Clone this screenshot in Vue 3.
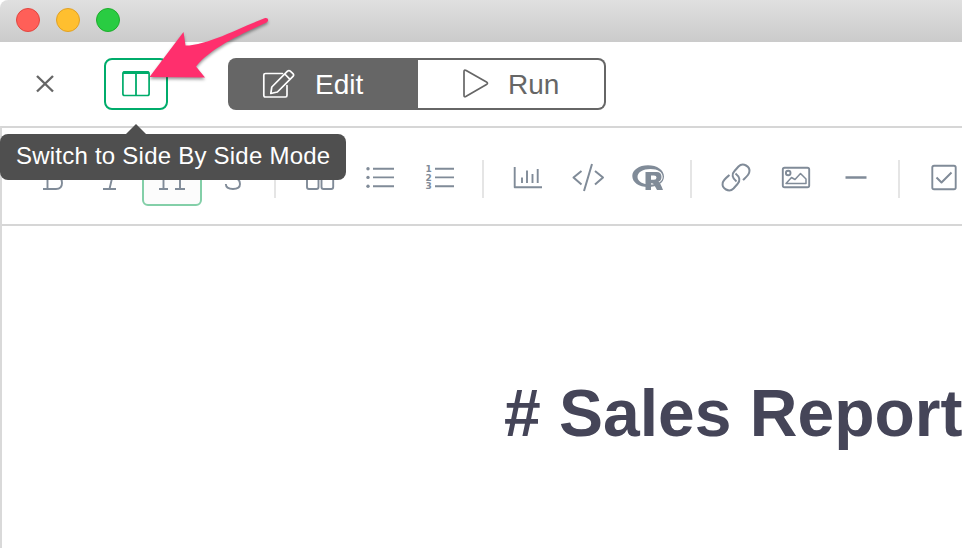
<script setup>
const ol = [{ n: 1, y: 169 }, { n: 2, y: 177.5 }, { n: 3, y: 186 }]
</script>

<template>
  <div class="window">
    <div class="titlebar">
      <i class="light red"></i><i class="light yellow"></i><i class="light green"></i>
    </div>
    <header class="header">
      <button class="close" aria-label="Close">
        <svg width="20" height="20" viewBox="35 74 20 20"><path d="M37 76L53 91.500M53 76L37 91.500" stroke="#666" stroke-width="2.400" fill="none" /></svg>
      </button>
      <div class="mode">
        <svg width="28" height="26" viewBox="122 71 28 26" fill="none" stroke="#00ac6b"><rect x="122.900" y="71.900" width="26.200" height="23.600" rx="1.800" stroke-width="1.700" /><path d="M123 72.700H149" stroke-width="2.600" /><path d="M136 73V95.500" stroke-width="1.800" /></svg>
        <div class="tooltip"><span>Switch to Side By Side Mode</span></div>
      </div>
      <div class="segments">
        <div class="segment edit">
          <svg width="34" height="30" viewBox="262 69 34 30" fill="none" stroke="#fff" stroke-width="1.700" stroke-linejoin="round" stroke-linecap="round"><path d="M282.500 73.500H265.500Q263.800 73.500 263.800 75V95.300Q263.800 97 265.500 97H285.500Q287 97 287 95.300V85.500" /><path d="M270.800 93.500L271.800 87L287.500 71.200Q289 70 290.300 71.200L293 73.700Q294.200 75 293 76.300L277.400 92ZM284.800 74L290 79.300" /></svg>
          <span>Edit</span>
        </div>
        <div class="segment run">
          <svg width="28" height="30" viewBox="462 69 28 30" fill="none" stroke="#666" stroke-width="1.700" stroke-linejoin="round"><path d="M464 71.800Q464 69.300 466.200 70.600L486.500 82Q488.500 83.300 486.500 84.600L466.200 96.300Q464 97.500 464 95.200Z" /></svg>
          <span>Run</span>
        </div>
      </div>
    </header>
    <main class="editor">
      <div class="toolbar">
        <div class="tool"><svg viewBox="22 148 60 58"><path d="M43 165.500H55Q61 165.500 61 171Q61 176 55 176.500Q62 176.500 62 183Q62 189 56 189H43M47.500 165.500V189M47.500 176.500H55" /></svg></div>
        <div class="tool"><svg viewBox="82 148 60 58"><path d="M109 165.500H120M103 189H116M115 165.500L109.500 189" /></svg></div>
        <div class="tool active"><svg viewBox="142 148 60 58"><path d="M159 165.500H168M176 165.500H185M159 189H168M175 189H185M163.500 165.500V189M180 165.500V189M163.500 177H180" /></svg></div>
        <div class="tool"><svg viewBox="202 148 60 58"><path d="M239 169Q238 165 232 165Q226 165 226 171Q226 176 232 177Q240 178 240 184Q240 189 233 189Q226 189 225.800 184" /></svg></div>
        <i class="divider"></i>
        <div class="tool"><svg viewBox="290 148 60 58"><path d="M318.500 177V187Q318.500 189 316.500 189H309Q307 189 307 187V173Q307 167 313 166M333.200 177V187Q333.200 189 331.200 189H323.500Q321.500 189 321.500 187V173Q321.500 167 328 166M307 177H318.500M321.500 177H333" /></svg></div>
        <div class="tool"><svg viewBox="350 148 60 58"><path d="M373 168.800H394M373 177.400H394M373 186.200H394" /><g class="solid"><circle cx="368" cy="168.800" r="1.700" /><circle cx="368" cy="177.400" r="1.700" /><circle cx="368" cy="186.200" r="1.700" /></g></svg></div>
        <div class="tool"><svg viewBox="410 148 60 58"><path d="M435 168.800H454M435 177.400H454M435 186.200H454" /><text v-for="r in ol" :key="r.n" x="425.600" :y="r.y + 3.200">{{ r.n }}</text></svg></div>
        <i class="divider"></i>
        <div class="tool"><svg viewBox="498 148 60 58"><path d="M514.700 167V187.200H542M522 177.500V183M527 170.500V183M532.500 174V183M537.700 169V183" /></svg></div>
        <div class="tool"><svg viewBox="558 148 60 58"><path d="M581.500 171L573.500 177.500L581.500 184.500M595 171L603 177.500L595 184.500M592 164L584 191" stroke-width="2" /></svg></div>
        <div class="tool"><svg viewBox="618 148 60 58"><g class="solid"><path fill-rule="evenodd" d="M648 165.200C657 165.200 664 170 664 176.500C664 183 657 187 648 187C639 187 632.300 182.500 632.300 176C632.300 170 639 165.200 648 165.200ZM650.500 169C643 169 637.500 172 637.500 177C637.500 181.500 643 184.500 650 184.500C657 184.500 662.700 182 662.700 177C662.700 172 658 169 650.500 169Z" /><path fill-rule="evenodd" d="M645.500 172H656.500Q661.500 172 661.500 177Q661.500 180.500 658.500 181.700Q660 182 663 190H657L654 184.500Q653.500 183.200 651 183.200V190H645.500ZM651 175.500V179.700H654Q656.500 179.700 656.500 177.500Q656.500 175.500 654 175.500Z" /></g></svg></div>
        <i class="divider"></i>
        <div class="tool"><svg viewBox="706 148 60 58"><path d="M736.500 181.500C732 178 731.500 174 734.500 171L738.500 166.500C743 162 750.500 166.500 749.300 172C749 175 745.500 177.500 743 180M735.500 173.500C740 177 740.500 181 737.500 184L733.500 188.500C729 193 721.500 188.500 722.700 183C723 180 726.500 177.500 729.500 175" stroke-width="2" /></svg></div>
        <div class="tool"><svg viewBox="766 148 60 58"><rect x="782.800" y="167.800" width="26.400" height="19.500" rx="1.800" /><circle cx="788.200" cy="173" r="2.300" /><path d="M786 183.500L791.500 177.500L795 179.500L800.500 173.500L806 179V183.500Z" stroke-width="1.500" /></svg></div>
        <div class="tool"><svg viewBox="826 148 60 58"><path d="M845.500 177.500H866.500" stroke-width="2.500" /></svg></div>
        <i class="divider"></i>
        <div class="tool"><svg viewBox="914 148 60 58"><rect x="932.300" y="165.800" width="23.400" height="23.400" rx="1.800" /><path d="M936.500 177.500L941.500 182.500L951.500 172.500" stroke-width="2" /></svg></div>
      </div>
      <section class="document"><h1># Sales Report</h1></section>
    </main>
    <svg class="arrow" width="136" height="76" viewBox="144 10 136 76"><path d="M149.500 77L183.500 32L185.500 45.500C207 45.500 239 28 264.500 18.200C268 17 269.500 20.500 266.500 22.500C240 35 211 48 196 66.500L205 77.500Z" fill="#ff2f6d" /></svg>
  </div>
</template>

<style>
body { background: #fff; overflow: hidden; }
</style>

<style scoped>
.window { position: relative; width: 962px; height: 548px; overflow: hidden; display: flex; flex-direction: column; font-family: "Liberation Sans", Arial, sans-serif; }
.titlebar { box-sizing: border-box; height: 42px; flex: none; display: flex; gap: 16px; padding: 8px 16px; background: linear-gradient(#e0e0e0, #cbcbcb); border-top-left-radius: 8px; }
.light { box-sizing: border-box; width: 24px; height: 24px; border-radius: 50%; border: 1px solid; }
.red { background: #ff5f58; border-color: #e2463f; }
.yellow { background: #ffbf2f; border-color: #e1a125; }
.green { background: #29cc42; border-color: #1dad2b; }
.header { box-sizing: border-box; height: 84px; flex: none; display: flex; align-items: flex-start; padding: 16px 0 0 35px; }
.close { width: 20px; height: 52px; padding: 0; border: 0; background: none; display: flex; align-items: center; }
.mode { position: relative; box-sizing: border-box; width: 64px; height: 52px; margin-left: 49px; border: 2px solid #00ac6b; border-radius: 8px; display: flex; align-items: center; justify-content: center; }
.tooltip { position: absolute; z-index: 3; left: -106px; top: 74px; box-sizing: border-box; width: 346px; height: 46px; padding-left: 16px; border-radius: 8px; background: #4f4f4f; color: #fff; font-size: 24px; line-height: 44px; letter-spacing: .23px; white-space: nowrap; }
.tooltip::before { content: ""; position: absolute; left: 126px; top: -10px; border: 10px solid transparent; border-top: 0; border-bottom-color: #4f4f4f; }
.segments { box-sizing: border-box; width: 378px; height: 52px; margin-left: 60px; border-radius: 8px; display: flex; overflow: hidden; background: #666; }
.segment { box-sizing: border-box; display: flex; align-items: center; font-size: 28px; color: #666; }
.edit { width: 190px; color: #fff; padding-left: 34px; gap: 19px; }
.run { width: 186px; margin: 2px 2px 2px 0; padding-left: 44px; gap: 18px; background: #fff; border-radius: 0 6px 6px 0; }
.segment span { line-height: 32px; padding-top: 1px; }
.editor { flex: 1; box-sizing: border-box; border-top: 2px solid #d6d6d6; border-left: 2px solid #d9d9d9; }
.toolbar { box-sizing: border-box; height: 98px; padding: 20px 0 0 20px; border-bottom: 2px solid #d6d6d6; display: flex; }
.tool { flex: none; width: 60px; height: 58px; box-sizing: border-box; }
.tool svg { display: block; width: 60px; height: 58px; fill: none; stroke: #808b98; stroke-width: 1.900; stroke-linejoin: round; }
.tool .solid { fill: #808b98; stroke: none; }
.tool text { fill: #808b98; stroke: none; font: bold 9px "DejaVu Sans", sans-serif; }
.active { border: 2px solid #83cfa8; border-radius: 6px; background: #fcfcfc; }
.active svg { margin: -2px; }
.divider { flex: none; width: 2px; height: 38px; margin: 12px 14px 0 12px; background: #e5e5e5; }
.document { padding: 149px 0 0 502px; }
h1 { margin: 0; font-size: 66px; line-height: 76px; font-weight: 700; color: #454558; white-space: nowrap; }
.arrow { position: absolute; z-index: 4; left: 144px; top: 10px; filter: drop-shadow(0 2px 1.500px rgba(0,0,0,.4)); }
</style>
